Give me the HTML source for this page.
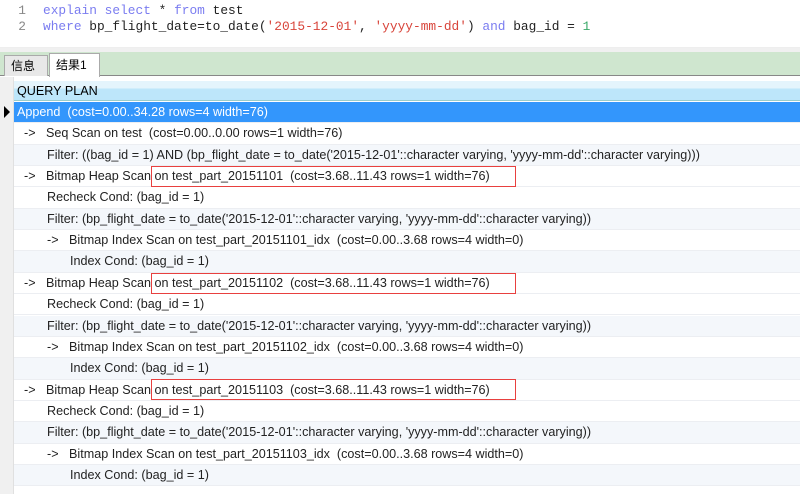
<!DOCTYPE html>
<html><head><meta charset="utf-8"><style>
*{margin:0;padding:0;box-sizing:border-box}
body{width:800px;height:494px;overflow:hidden;background:#fff;position:relative;font-family:"Liberation Sans","Noto Sans CJK SC",sans-serif}
.code{position:absolute;left:0;top:0;width:800px;height:48px;background:#fff;font-family:"Liberation Mono",monospace;font-size:12.85px;border-bottom:1px solid #eee}
.code div{position:absolute;left:0;height:16px;line-height:16px;white-space:pre}
.ln{color:#888;display:inline-block;width:26px;text-align:right;margin-right:17px}
.k{color:#7a7cf0}.s{color:#d8443a}.n{color:#3aa868}.t{color:#222}
.gap{position:absolute;top:48px;left:0;width:800px;height:4px;background:#f0f0f0}
.tabs{position:absolute;top:52px;left:0;width:800px;height:24px;background:#cfe6cf;border-bottom:1px solid #888}
.tab{position:absolute;top:3px;height:21px;font-size:12px;line-height:20px;padding-left:6px;border:1px solid #aaa;border-bottom:none}
.grid{position:absolute;top:77px;left:0;width:800px;height:417px;background:#fff}
.hdr{position:absolute;top:4px;left:14px;width:786px;height:20px;background:linear-gradient(#e4f4fc 0,#e4f4fc 40%,#bde6fa 40%,#bde6fa);font-size:12.6px;line-height:20px;padding-left:3px;border-bottom:1px solid #9cc}
.gut{position:absolute;top:0;left:0;width:14px;height:417px;background:#f0f0f0;border-right:1px solid #e0e0e0}
.row{position:absolute;left:14px;width:786px;height:21.35px;font-size:12.6px;line-height:21px;color:#222;border-bottom:1px solid #eceef2;white-space:pre}
.row b{font-weight:normal;position:absolute;top:0}
.sh{background:#f4f7fb}
.sel{background:#3396fc;color:#fff}
.box{position:absolute;z-index:5;left:151px;width:365px;height:21px;box-shadow:inset 0 0 0 1px #e8403f}
</style></head><body>
<div class="code">
<div style="top:3px"><span class="ln">1</span><span class="k">explain select</span> <span class="t">*</span> <span class="k">from</span> <span class="t">test</span></div>
<div style="top:19px"><span class="ln">2</span><span class="k">where</span> <span class="t">bp_flight_date=to_date(</span><span class="s">'2015-12-01'</span><span class="t">, </span><span class="s">'yyyy-mm-dd'</span><span class="t">) </span><span class="k">and</span><span class="t"> bag_id = </span><span class="n">1</span></div>
</div>
<div class="gap"></div>
<div class="tabs">
<div class="tab" style="left:4px;width:44px;background:#e8e8e8">信息</div>
<div class="tab" style="left:49px;width:51px;background:#fff;top:1px;height:24px;line-height:22px">结果1</div>
</div>
<div class="grid">
<div class="gut"></div>
<div class="hdr">QUERY PLAN</div>
<div style="position:absolute;left:4px;top:29px;width:0;height:0;border-left:6px solid #000;border-top:6px solid transparent;border-bottom:6px solid transparent"></div>
<div class="row sel" style="top:25px;padding-left:3px">Append  (cost=0.00..34.28 rows=4 width=76)</div>
<div class="row" style="top:46.35px"><b style="left:10px">-&gt;</b><b style="left:32px">Seq Scan on test  (cost=0.00..0.00 rows=1 width=76)</b></div>
<div class="row sh" style="top:67.7px;padding-left:33px">Filter: ((bag_id = 1) AND (bp_flight_date = to_date('2015-12-01'::character varying, 'yyyy-mm-dd'::character varying)))</div>
<div class="row" style="top:89.05px"><b style="left:10px">-&gt;</b><b style="left:32px">Bitmap Heap Scan on test_part_20151101  (cost=3.68..11.43 rows=1 width=76)</b></div>
<div class="row" style="top:110.4px;padding-left:33px">Recheck Cond: (bag_id = 1)</div>
<div class="row sh" style="top:131.75px;padding-left:33px">Filter: (bp_flight_date = to_date('2015-12-01'::character varying, 'yyyy-mm-dd'::character varying))</div>
<div class="row" style="top:153.1px"><b style="left:33px">-&gt;</b><b style="left:55px">Bitmap Index Scan on test_part_20151101_idx  (cost=0.00..3.68 rows=4 width=0)</b></div>
<div class="row sh" style="top:174.45px;padding-left:56px">Index Cond: (bag_id = 1)</div>
<div class="row" style="top:195.8px"><b style="left:10px">-&gt;</b><b style="left:32px">Bitmap Heap Scan on test_part_20151102  (cost=3.68..11.43 rows=1 width=76)</b></div>
<div class="row" style="top:217.15px;padding-left:33px">Recheck Cond: (bag_id = 1)</div>
<div class="row sh" style="top:238.5px;padding-left:33px">Filter: (bp_flight_date = to_date('2015-12-01'::character varying, 'yyyy-mm-dd'::character varying))</div>
<div class="row" style="top:259.85px"><b style="left:33px">-&gt;</b><b style="left:55px">Bitmap Index Scan on test_part_20151102_idx  (cost=0.00..3.68 rows=4 width=0)</b></div>
<div class="row sh" style="top:281.2px;padding-left:56px">Index Cond: (bag_id = 1)</div>
<div class="row" style="top:302.55px"><b style="left:10px">-&gt;</b><b style="left:32px">Bitmap Heap Scan on test_part_20151103  (cost=3.68..11.43 rows=1 width=76)</b></div>
<div class="row" style="top:323.9px;padding-left:33px">Recheck Cond: (bag_id = 1)</div>
<div class="row sh" style="top:345.25px;padding-left:33px">Filter: (bp_flight_date = to_date('2015-12-01'::character varying, 'yyyy-mm-dd'::character varying))</div>
<div class="row" style="top:366.6px"><b style="left:33px">-&gt;</b><b style="left:55px">Bitmap Index Scan on test_part_20151103_idx  (cost=0.00..3.68 rows=4 width=0)</b></div>
<div class="row sh" style="top:387.95px;padding-left:56px">Index Cond: (bag_id = 1)</div>
<div class="box" style="top:89px"></div>
<div class="box" style="top:196px"></div>
<div class="box" style="top:302px"></div>
</div>
</body></html>
